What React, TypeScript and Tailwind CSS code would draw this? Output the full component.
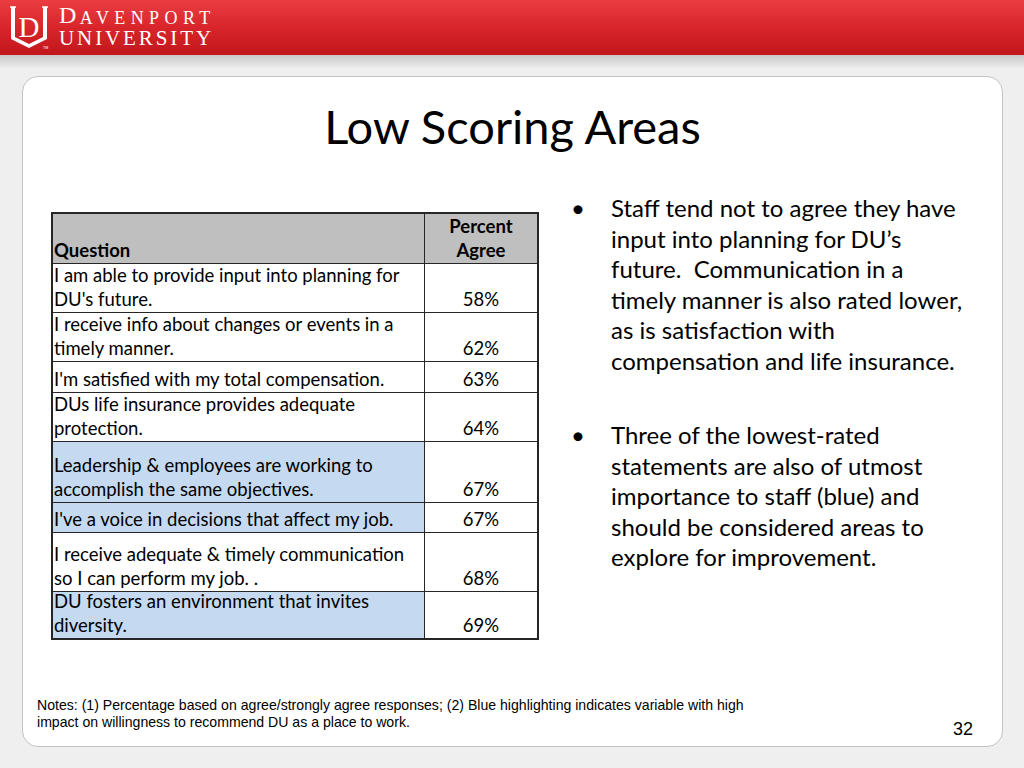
import React from "react";

type Row = { lines: string[]; pct: string; h: number; blue?: boolean };

const rows: Row[] = [
  { lines: ["I am able to provide input into planning for", "DU's future."], pct: "58%", h: 49 },
  { lines: ["I receive info about changes or events in a", "timely manner."], pct: "62%", h: 49 },
  { lines: ["I'm satisfied with my total compensation."], pct: "63%", h: 31 },
  { lines: ["DUs life insurance provides adequate", "protection."], pct: "64%", h: 49 },
  { lines: ["Leadership & employees are working to", "accomplish the same objectives."], pct: "67%", h: 61, blue: true },
  { lines: ["I've a voice in decisions that affect my job."], pct: "67%", h: 30, blue: true },
  { lines: ["I receive adequate & timely communication", "so I can perform my job. ."], pct: "68%", h: 59 },
  { lines: ["DU fosters an environment that invites", "diversity."], pct: "69%", h: 47, blue: true },
];

function Logo() {
  return (
    <div className="flex items-start gap-[8px] pl-[9px] pt-[5px]">
      <svg width="42" height="45" viewBox="0 0 42 45">
        <path d="M2 2 L6 2 L6 32 L20 39 L34 32 L34 2 L38 2 L38 34 L20 43 L2 34 Z" fill="#fff" />
        <path d="M1 2 L7 2 M33 2 L39 2" stroke="#fff" strokeWidth="1.5" />
        <text x="20" y="32" textAnchor="middle" fontFamily="Liberation Serif, serif" fontSize="29" fill="#fff">D</text>
        <text x="34" y="44" fontFamily="Liberation Sans, sans-serif" fontSize="3.5" fill="#fff">TM</text>
      </svg>
      <div className="flex flex-col text-white font-['Liberation_Serif',serif] leading-none pt-[4px]">
        <div className="flex items-end h-[18px]">
          <span className="text-[24px] leading-none tracking-[3.5px]">D</span>
          <span className="text-[18px] leading-none tracking-[5.4px]">AVENPORT</span>
        </div>
        <div className="text-[21px] leading-none tracking-[2.9px] mt-[1px]">UNIVERSITY</div>
      </div>
    </div>
  );
}

export default function App() {
  return (
    <div className="w-[1024px] h-[768px] bg-[#efefef] overflow-hidden flex flex-col font-['Lato',sans-serif] text-black">
      <div className="h-[55px] shrink-0 bg-linear-to-b from-[#ea3c41] via-[#d8252b] to-[#c2161c]">
        <Logo />
      </div>
      <div className="h-[14px] shrink-0 bg-linear-to-b from-[#c9c9c9] to-[#efefef]" />
      <div className="ml-[22px] mt-[7px] w-[981px] h-[671px] bg-white rounded-[16px] border border-[#c4c4c4] flex flex-col">
        <h1 className="pt-[21px] text-center text-[47px] leading-[56px] font-normal">Low Scoring Areas</h1>
        <div className="flex mt-[39px]">
          <div className="pl-[28px] pt-[19px]">
            <div className="w-[488px] border-2 border-[#262626] text-[18.5px] leading-[24px]">
              <div className="flex h-[49px] bg-[#bfbfbf] font-bold">
                <div className="w-[372px] border-r-[1.5px] border-[#262626] flex items-end pl-[1px] pb-[1px]">Question</div>
                <div className="flex-1 flex flex-col justify-end items-center pb-[1px]">
                  <div>Percent</div>
                  <div>Agree</div>
                </div>
              </div>
              {rows.map((r, i) => (
                <div key={i} className="flex border-t-[1.5px] border-[#262626]" style={{ height: r.h }}>
                  <div className={`w-[372px] border-r-[1.5px] border-[#262626] flex flex-col justify-end pl-[1px] pb-[1px] whitespace-nowrap ${r.blue ? "bg-[#c5d9f1]" : "bg-white"}`}>
                    {r.lines.map((l, j) => (
                      <div key={j}>{l}</div>
                    ))}
                  </div>
                  <div className="flex-1 flex items-end justify-center pb-[1px]">{r.pct}</div>
                </div>
              ))}
            </div>
          </div>
          <div className="ml-[32px] text-[24px] leading-[30.5px] whitespace-nowrap">
            <div className="flex">
              <span className="w-[40px]">•</span>
              <div>
                <div>Staff tend not to agree they have</div>
                <div>input into planning for DU’s</div>
                <div>future.&nbsp; Communication in a</div>
                <div>timely manner is also rated lower,</div>
                <div>as is satisfaction with</div>
                <div>compensation and life insurance.</div>
              </div>
            </div>
            <div className="flex mt-[44px]">
              <span className="w-[40px]">•</span>
              <div>
                <div>Three of the lowest-rated</div>
                <div>statements are also of utmost</div>
                <div>importance to staff (blue) and</div>
                <div>should be considered areas to</div>
                <div>explore for improvement.</div>
              </div>
            </div>
          </div>
        </div>
        <div className="mt-auto flex items-end justify-between pl-[14px] pr-[29px] pb-[7px]">
          <div className="mb-[8px] font-['Liberation_Sans',sans-serif] text-[14.1px] leading-[17px]">
            <div>Notes: (1) Percentage based on agree/strongly agree responses; (2) Blue highlighting indicates variable with high</div>
            <div>impact on willingness to recommend DU as a place to work.</div>
          </div>
          <div className="font-['Liberation_Sans',sans-serif] text-[18px] leading-[20px]">32</div>
        </div>
      </div>
    </div>
  );
}
